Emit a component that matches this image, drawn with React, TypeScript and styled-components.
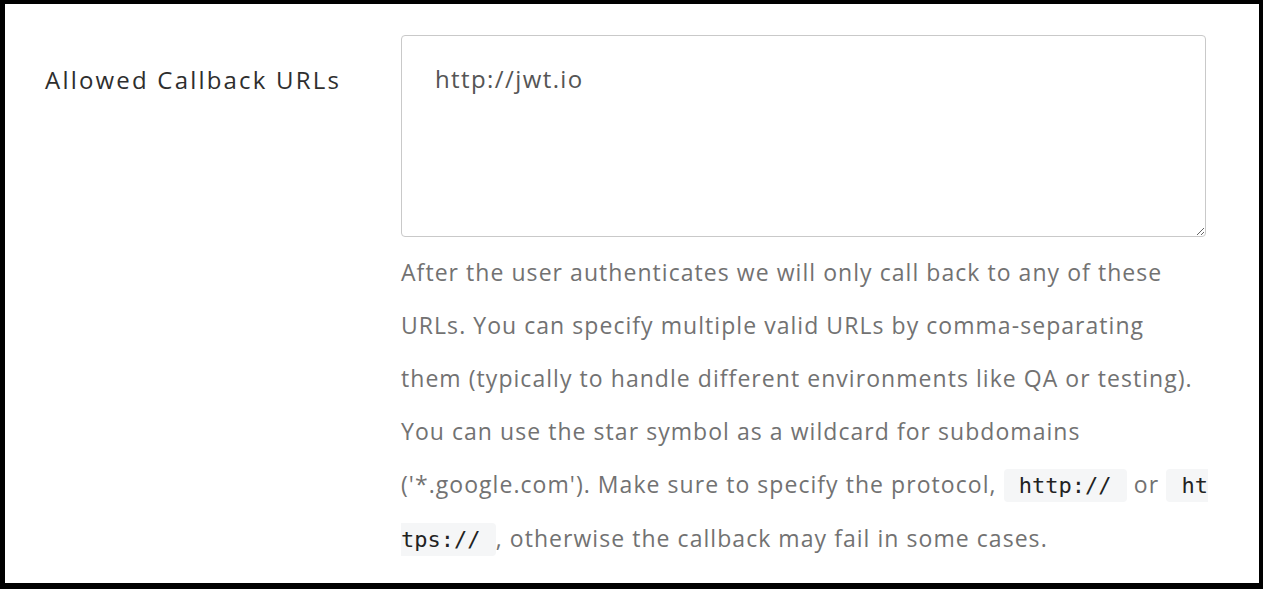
import styled, { createGlobalStyle } from "styled-components";

const GlobalStyle = createGlobalStyle`
  html, body {
    margin: 0;
    padding: 0;
    background: #fff;
  }
  body {
    font-family: "Open Sans", Lato, sans-serif;
  }
`;

const Frame = styled.div`
  box-sizing: border-box;
  width: 1263px;
  height: 589px;
  border: solid #000;
  border-width: 4px 4px 6px 5px;
  background: #fff;
  overflow: hidden;
`;

const FieldRow = styled.div`
  display: grid;
  grid-template-columns: 396px 805px;
  padding-top: 31px;
`;

const Label = styled.label`
  padding: 30px 0 0 40px;
  font-size: 24px;
  letter-spacing: 2.2px;
  color: #2e2e2e;
  line-height: 30px;
`;

const Field = styled.div`
  display: flex;
  flex-direction: column;
`;

const Input = styled.textarea`
  box-sizing: border-box;
  width: 805px;
  height: 202px;
  padding: 28px 33px;
  border: 1px solid #c9c9c9;
  border-radius: 4px;
  font-family: "Open Sans", Lato, sans-serif;
  font-size: 24px;
  letter-spacing: 1.4px;
  line-height: 30px;
  color: #555;
  resize: vertical;
  outline: none;
`;

const Help = styled.p`
  margin: 9px 0 0;
  font-size: 23px;
  letter-spacing: 1.05px;
  line-height: 53px;
  color: #727272;
  white-space: nowrap;
`;

// a code chunk may be cut by the line wrap: "start" keeps only the left pad, "end" only the right
const Code = styled.code<{ $cut?: "start" | "end" }>`
  font-family: "DejaVu Sans Mono", monospace;
  font-size: 22px;
  letter-spacing: 0;
  white-space: pre;
  color: #222;
  background: #f5f6f7;
  padding: 4px ${p => (p.$cut === "start" ? "0" : "2px")} 4px
    ${p => (p.$cut === "end" ? "0" : "2px")};
  border-radius: ${p =>
    p.$cut === "start" ? "4px 0 0 4px" : p.$cut === "end" ? "0 4px 4px 0" : "4px"};
`;

export default function App() {
  return (
    <>
      <GlobalStyle />
      <Frame>
        <FieldRow>
          <Label htmlFor="callbacks">Allowed Callback URLs</Label>
          <Field>
            <Input id="callbacks" defaultValue="http://jwt.io" />
            <Help>
              After the user authenticates we will only call back to any of these
              <br />
              URLs. You can specify multiple valid URLs by comma-separating
              <br />
              them (typically to handle different environments like QA or testing).
              <br />
              You can use the star symbol as a wildcard for subdomains
              <br />
              ('*.google.com'). Make sure to specify the protocol, <Code>{" http:// "}</Code> or{" "}
              <Code $cut="start">{" ht"}</Code>
              <br />
              <Code $cut="end">{"tps:// "}</Code>, otherwise the callback may fail in some cases.
            </Help>
          </Field>
        </FieldRow>
      </Frame>
    </>
  );
}
